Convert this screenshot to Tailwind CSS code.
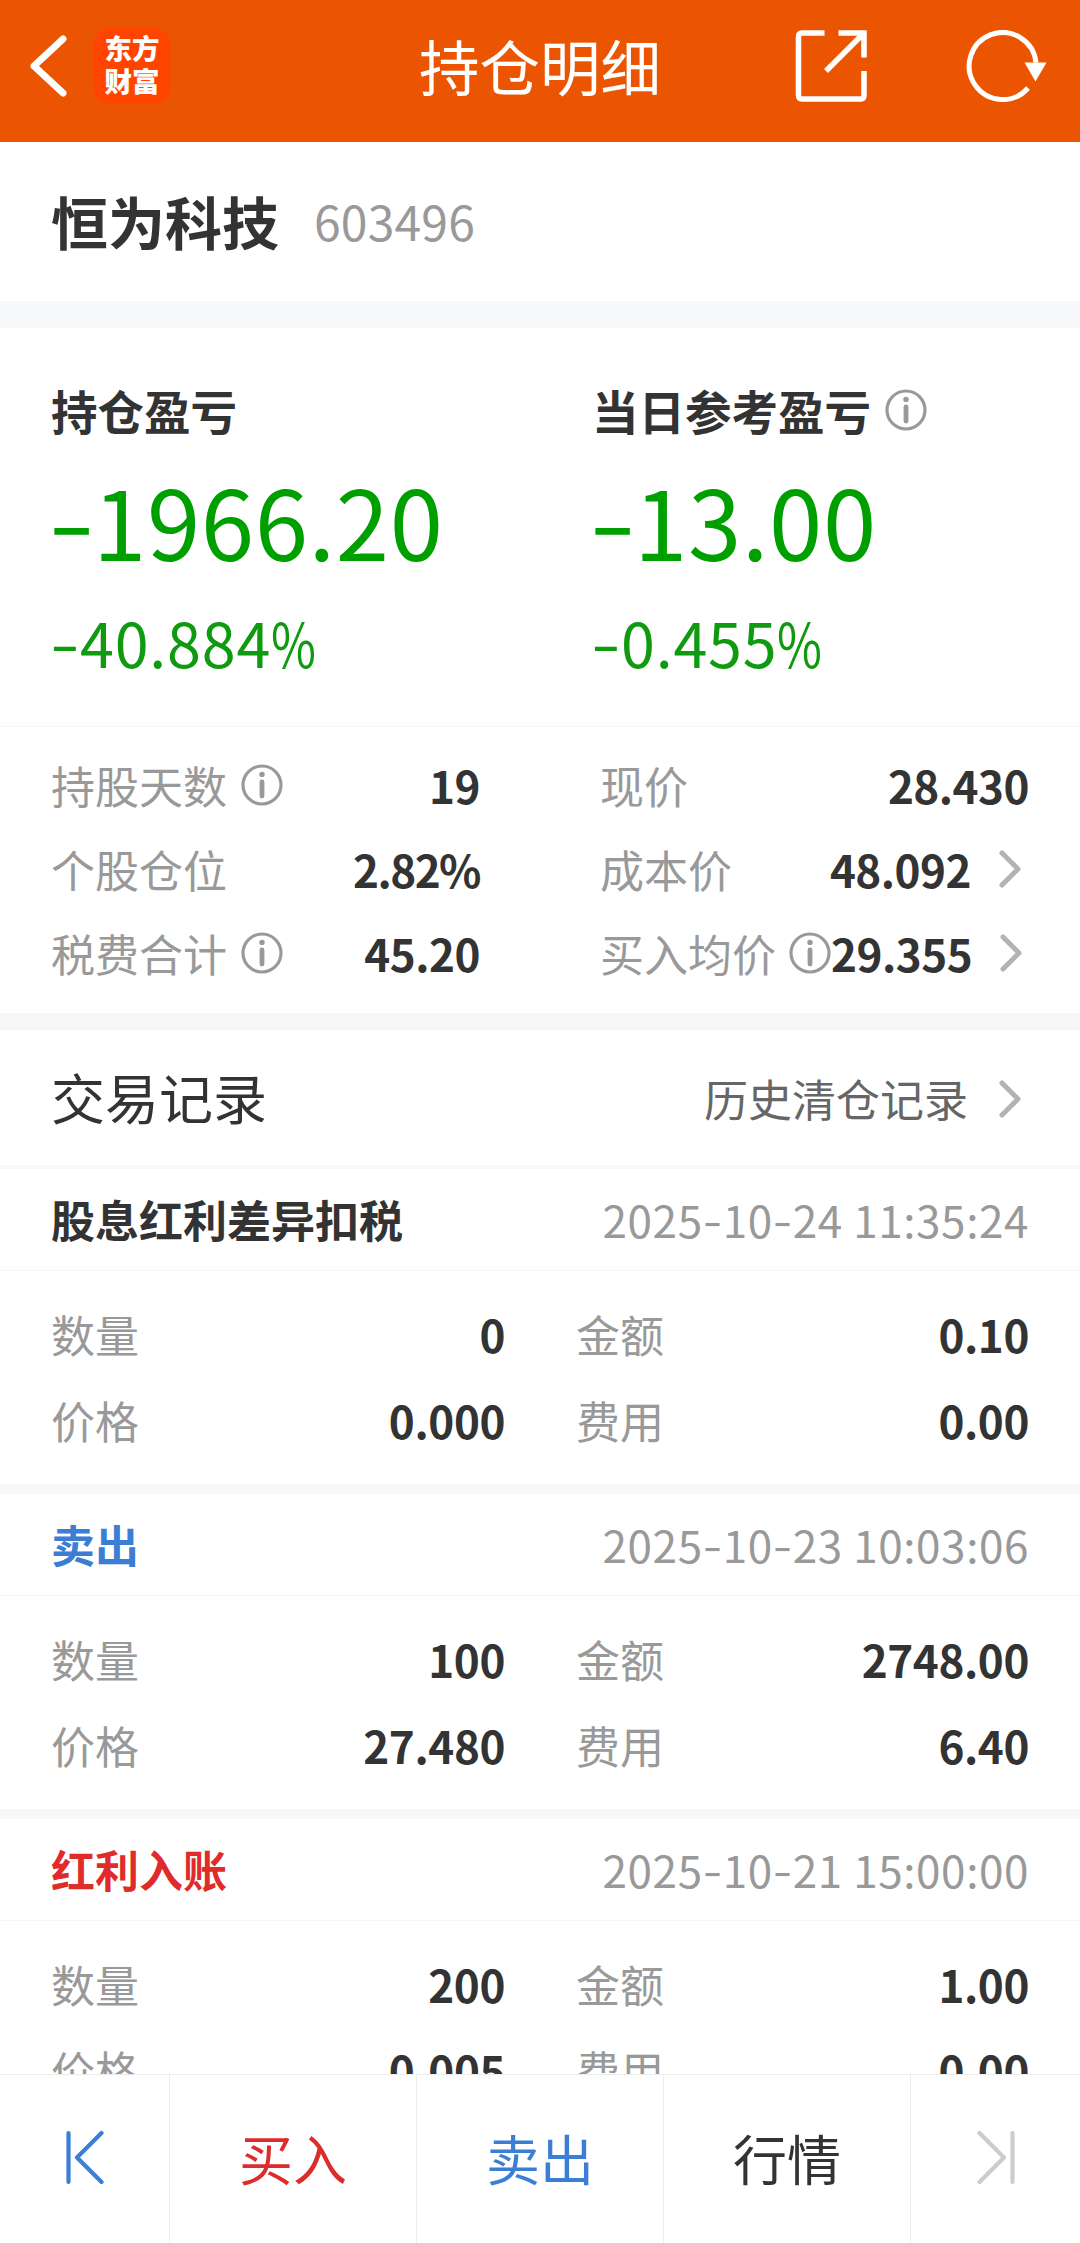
<!DOCTYPE html>
<html lang="zh-CN">
<head>
  <meta charset="UTF-8">
  <title>持仓明细</title>
  <script src="https://cdn.jsdelivr.net/npm/@tailwindcss/browser@4"></script>
</head>
<body class="bg-white text-[#333] font-['Noto_Sans_CJK_SC',sans-serif]">
  <svg class="hidden">
    <symbol id="info" viewBox="0 0 42 42">
      <circle cx="21" cy="21" r="19" fill="none" stroke="#999" stroke-width="3.2"/>
      <circle cx="21" cy="10.4" r="2.7" fill="#999"/>
      <path d="M21 18v14" stroke="#999" stroke-width="4.800" stroke-linecap="round"/>
    </symbol>
    <symbol id="arrow" viewBox="0 0 22 38">
      <path d="M3 3l16 16L3 35" fill="none" stroke="#b3b3b3" stroke-width="5" stroke-linecap="round" stroke-linejoin="round"/>
    </symbol>
  </svg>

  <div class="w-[1080px] h-[2243px] flex flex-col overflow-hidden">
    <header class="h-[142px] shrink-0 bg-[#eb5502] text-white grid grid-cols-[1fr_auto_1fr] items-center pb-[11px]">
      <div class="flex items-center pl-[28px]">
        <svg class="w-[40px] h-[64px]" viewBox="0 0 40 64" fill="none" stroke="#fff" stroke-width="7" stroke-linecap="round" stroke-linejoin="round"><path d="M35 5L6 32l29 27"/></svg>
        <div class="ml-[26px] w-[76px] h-[76px] rounded-[16px] bg-[#ff4400] text-[27.5px] leading-[33px] font-black text-center pt-[3px]">东方<br>财富</div>
      </div>
      <h1 class="text-[60.5px] leading-[64px] pb-[2px]">持仓明细</h1>
      <div class="flex items-center justify-end gap-[99px] pr-[33px]">
        <svg class="w-[72px] h-[72px]" viewBox="0 0 72 72" fill="none" stroke="#fff" stroke-width="5.5">
          <path d="M29.500 3H7Q3.500 3 3.500 7v58q0 4 3.500 4h59q3 0 3-4V41"/>
          <path d="M43.500 3H69v24.500M68 4L31 41"/>
        </svg>
        <svg class="w-[81px] h-[72px]" viewBox="0 0 81 72">
          <path d="M62 58A33.500 33.500 0 1 1 70 32.500" fill="none" stroke="#fff" stroke-width="5"/>
          <path d="M58.500 32.500h22L69.500 51.500z" fill="#fff"/>
        </svg>
      </div>
    </header>

    <section class="h-[159px] shrink-0 flex items-center pl-[51px] pb-[4px]">
      <h2 class="text-[57px] leading-[60px] font-bold">恒为科技</h2>
      <span class="ml-[35px] text-[48px] leading-[60px] tracking-[0.2px] text-[#999]">603496</span>
    </section>

    <section class="h-[425px] shrink-0 border-t-[27px] border-[#f7f8fa] pt-[56px] grid grid-cols-[541px_1fr] pl-[51px]">
      <div>
        <div class="h-[52px] flex items-center text-[46.5px] leading-[52px] font-bold">持仓盈亏</div>
        <div class="mt-[34px] h-[100px] text-[96px] leading-[100px] tracking-[0.6px] text-[#009f00]"><span class="inline-block w-[42px] text-center scale-x-140 -translate-y-[3px]">-</span>1966.20</div>
        <div class="mt-[40px] h-[64px] text-[61px] leading-[64px] tracking-[0.8px] text-[#0f9a0f]"><span class="inline-block w-[29px] text-center scale-x-140 -translate-y-[2px]">-</span>40.884<span class="inline-block origin-left scale-x-80">%</span></div>
      </div>
      <div>
        <div class="h-[52px] flex items-center text-[46.5px] leading-[52px] font-bold">当日参考盈亏<svg class="w-[42px] h-[42px] ml-[14px]"><use href="#info"/></svg></div>
        <div class="mt-[34px] h-[100px] text-[96px] leading-[100px] tracking-[0.6px] text-[#009f00]"><span class="inline-block w-[42px] text-center scale-x-140 -translate-y-[3px]">-</span>13.00</div>
        <div class="mt-[40px] h-[64px] text-[61px] leading-[64px] tracking-[0.8px] text-[#0f9a0f]"><span class="inline-block w-[29px] text-center scale-x-140 -translate-y-[2px]">-</span>0.455<span class="inline-block origin-left scale-x-80">%</span></div>
      </div>
    </section>

    <section class="h-[304px] shrink-0 border-t border-b-[17px] border-[#f5f6f8] pt-[16px] pl-[51px] pr-[51px] grid grid-cols-[429px_429px] justify-between auto-rows-[84px] text-[44px] leading-[84px] whitespace-nowrap [&_b]:tracking-[-0.5px]">
      <div class="flex items-center"><span class="text-[#999]">持股天数</span><svg class="w-[42px] h-[42px] ml-[14px]"><use href="#info"/></svg><b class="ml-auto">19</b></div>
      <div class="flex items-center"><span class="text-[#999]">现价</span><b class="ml-auto">28.430</b></div>
      <div class="flex items-center"><span class="text-[#999]">个股仓位</span><b class="ml-auto tracking-[-1.5px]!">2.82%</b></div>
      <div class="flex items-center"><span class="text-[#999]">成本价</span><b class="ml-auto">48.092</b><svg class="w-[22px] h-[38px] ml-[28px] mr-[8px]"><use href="#arrow"/></svg></div>
      <div class="flex items-center"><span class="text-[#999]">税费合计</span><svg class="w-[42px] h-[42px] ml-[14px]"><use href="#info"/></svg><b class="ml-auto">45.20</b></div>
      <div class="flex items-center"><span class="text-[#999]">买入均价</span><svg class="w-[42px] h-[42px] ml-[13px] shrink-0"><use href="#info"/></svg><b class="ml-auto">29.355</b><svg class="w-[22px] h-[38px] ml-[28px] mr-[8px] shrink-0"><use href="#arrow"/></svg></div>
    </section>

    <section class="h-[139px] shrink-0 border-b-4 border-[#f7f8fa] flex items-center pl-[51px] pr-[59px]">
      <h3 class="text-[54px] leading-[60px] pb-[2px]">交易记录</h3>
      <span class="ml-auto text-[44px] leading-[60px] text-[#666]">历史清仓记录</span>
      <svg class="w-[22px] h-[38px] ml-[31px] mt-[2px]"><use href="#arrow"/></svg>
    </section>

    <main id="records" class="flex-1 min-h-0 overflow-hidden"></main>

    <nav class="h-[169px] shrink-0 border-t border-[#ececec] bg-white grid grid-cols-[169px_247px_247px_247px_170px] text-[54px] leading-[60px] [&>*]:flex [&>*]:items-center [&>*]:justify-center [&>*+*]:border-l [&>*+*]:border-[#ececec]">
      <div class="pb-[4px]"><svg class="w-[38px] h-[55px]" viewBox="0 0 38 54" fill="none" stroke="#3b7ed4" stroke-width="4.200" stroke-linecap="round" stroke-linejoin="round"><path d="M2.500 2.500v49M35.500 2.500L11 27l24.500 24.500"/></svg></div>
      <div class="text-[#dc2c2c] pb-[2px]">买入</div>
      <div class="text-[#3b7ed4] pb-[2px]">卖出</div>
      <div class="pb-[2px]">行情</div>
      <div class="pb-[4px]"><svg class="w-[38px] h-[55px]" viewBox="0 0 38 54" fill="none" stroke="#ccc" stroke-width="4.200" stroke-linecap="round" stroke-linejoin="round"><path d="M35.500 2.500v49M2.500 2.500L27 27 2.500 51.500"/></svg></div>
    </nav>
  </div>

  <script>
    const records = [
      { type: '股息红利差异扣税', color: 'text-[#333]', time: '2025-10-24 11:35:24', count: '0', amount: '0.10', price: '0.000', fee: '0.00' },
      { type: '卖出', color: 'text-[#3b7ed4]', time: '2025-10-23 10:03:06', count: '100', amount: '2748.00', price: '27.480', fee: '6.40' },
      { type: '红利入账', color: 'text-[#e02b2b]', time: '2025-10-21 15:00:00', count: '200', amount: '1.00', price: '0.005', fee: '0.00' },
    ];

    const cell = (label, value) => `
      <div class="flex justify-between"><span class="text-[#999]">${label}</span><b class="tracking-[-0.4px]">${value}</b></div>`;

    // the hyphens sit in slightly wider boxes than the font gives them
    const date = t => t.replace(/-/g, '<span class="inline-block w-[20px] text-center scale-x-125 -translate-y-px">-</span>');

    document.getElementById('records').innerHTML = records.map(r => `
      <div class="h-[325px] border-b-[10px] border-[#f7f8fa] text-[44px]">
        <div class="h-[102px] border-b border-[#f5f6f8] pl-[51px] pr-[51px] flex justify-between leading-[100px]">
          <b class="${r.color}">${r.type}</b>
          <span class="text-[#999] tracking-[0.6px]">${date(r.time)}</span>
        </div>
        <div class="pt-[20px] pl-[51px] pr-[51px] grid grid-cols-[454px_453px] justify-between auto-rows-[86px] leading-[86px]">
          ${cell('数量', r.count)}${cell('金额', r.amount)}
          ${cell('价格', r.price)}${cell('费用', r.fee)}
        </div>
      </div>
    `).join('');
  </script>
</body>
</html>
